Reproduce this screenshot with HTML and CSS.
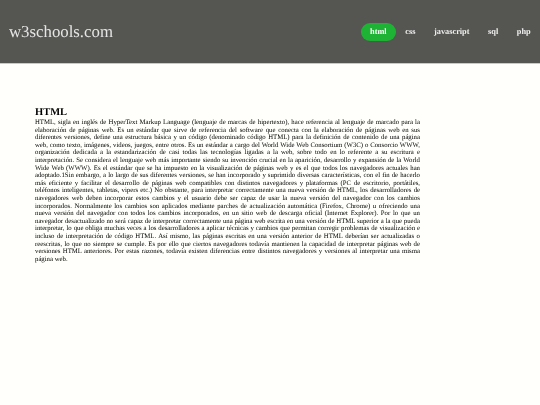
FILE: index.html
```html
<!DOCTYPE html>
<html lang="en">
<head>
    <meta charset="UTF-8">
    <meta name="viewport" content="width=device-width, initial-scale=1.0">
    <title>w3schools.com</title>
    <link rel="stylesheet" href="styles.css">
</head>
<body>
    <header class="topbar">
        <div class="logo">w3schools.com</div>
        <nav class="menu">
            <a href="#" class="menu-item active">html</a>
            <a href="#" class="menu-item">css</a>
            <a href="#" class="menu-item">javascript</a>
            <a href="#" class="menu-item">sql</a>
            <a href="#" class="menu-item">php</a>
        </nav>
    </header>
    <main class="content">
        <h1>HTML</h1>
        <p>HTML, sigla en inglés de HyperText Markup Language (lenguaje de marcas de hipertexto), hace referencia al lenguaje de marcado para la elaboración de páginas web. Es un estándar que sirve de referencia del software que conecta con la elaboración de páginas web en sus diferentes versiones, define una estructura básica y un código (denominado código HTML) para la definición de contenido de una página web, como texto, imágenes, videos, juegos, entre otros. Es un estándar a cargo del World Wide Web Consortium (W3C) o Consorcio WWW, organización dedicada a la estandarización de casi todas las tecnologías ligadas a la web, sobre todo en lo referente a su escritura e interpretación. Se considera el lenguaje web más importante siendo su invención crucial en la aparición, desarrollo y expansión de la World Wide Web (WWW). Es el estándar que se ha impuesto en la visualización de páginas web y es el que todos los navegadores actuales han adoptado.1Sin embargo, a lo largo de sus diferentes versiones, se han incorporado y suprimido diversas características, con el fin de hacerlo más eficiente y facilitar el desarrollo de páginas web compatibles con distintos navegadores y plataformas (PC de escritorio, portátiles, teléfonos inteligentes, tabletas, vipers etc.) No obstante, para interpretar correctamente una nueva versión de HTML, los desarrolladores de navegadores web deben incorporar estos cambios y el usuario debe ser capaz de usar la nueva versión del navegador con los cambios incorporados. Normalmente los cambios son aplicados mediante parches de actualización automática (Firefox, Chrome) u ofreciendo una nueva versión del navegador con todos los cambios incorporados, en un sitio web de descarga oficial (Internet Explorer). Por lo que un navegador desactualizado no será capaz de interpretar correctamente una página web escrita en una versión de HTML superior a la que pueda interpretar, lo que obliga muchas veces a los desarrolladores a aplicar técnicas y cambios que permitan corregir problemas de visualización e incluso de interpretación de código HTML. Así mismo, las páginas escritas en una versión anterior de HTML deberían ser actualizadas o reescritas, lo que no siempre se cumple. Es por ello que ciertos navegadores todavía mantienen la capacidad de interpretar páginas web de versiones HTML anteriores. Por estas razones, todavía existen diferencias entre distintos navegadores y versiones al interpretar una misma página web.</p>
    </main>
</body>
</html>
```

FILE: styles.css
```css
body {
    margin: 0;
    background-color: #fffffb;
    font-family: "Liberation Serif", "Times New Roman", serif;
    color: #000;
    text-rendering: geometricPrecision;
}

.topbar {
    display: flex;
    justify-content: space-between;
    align-items: center;
    height: 63px;
    padding: 0 0 0 9px;
    background-color: #555652;
    border-bottom: 1px solid #c9cac6;
}

.logo {
    font-size: 16.8px;
    color: #e6e6e6;
    filter: blur(0.25px);
}

.menu {
    display: flex;
    align-items: center;
    filter: blur(0.2px);
}

.menu-item {
    padding: 4px 9.3px;
    border-radius: 10px;
    font-size: 8.3px;
    font-weight: bold;
    line-height: 10px;
    text-decoration: none;
    color: #f0f0f0;
}

.menu-item.active {
    background-color: #1fb336;
    color: white;
}

.content {
    width: 385px;
    padding: 43px 0 0 35px;
    filter: blur(0.15px);
}

.content h1 {
    margin: 0;
    font-size: 10.5px;
    line-height: 12px;
}

.content p {
    margin: 0;
    font-size: 6.75px;
    line-height: 7.6px;
    text-align: justify;
}
```
